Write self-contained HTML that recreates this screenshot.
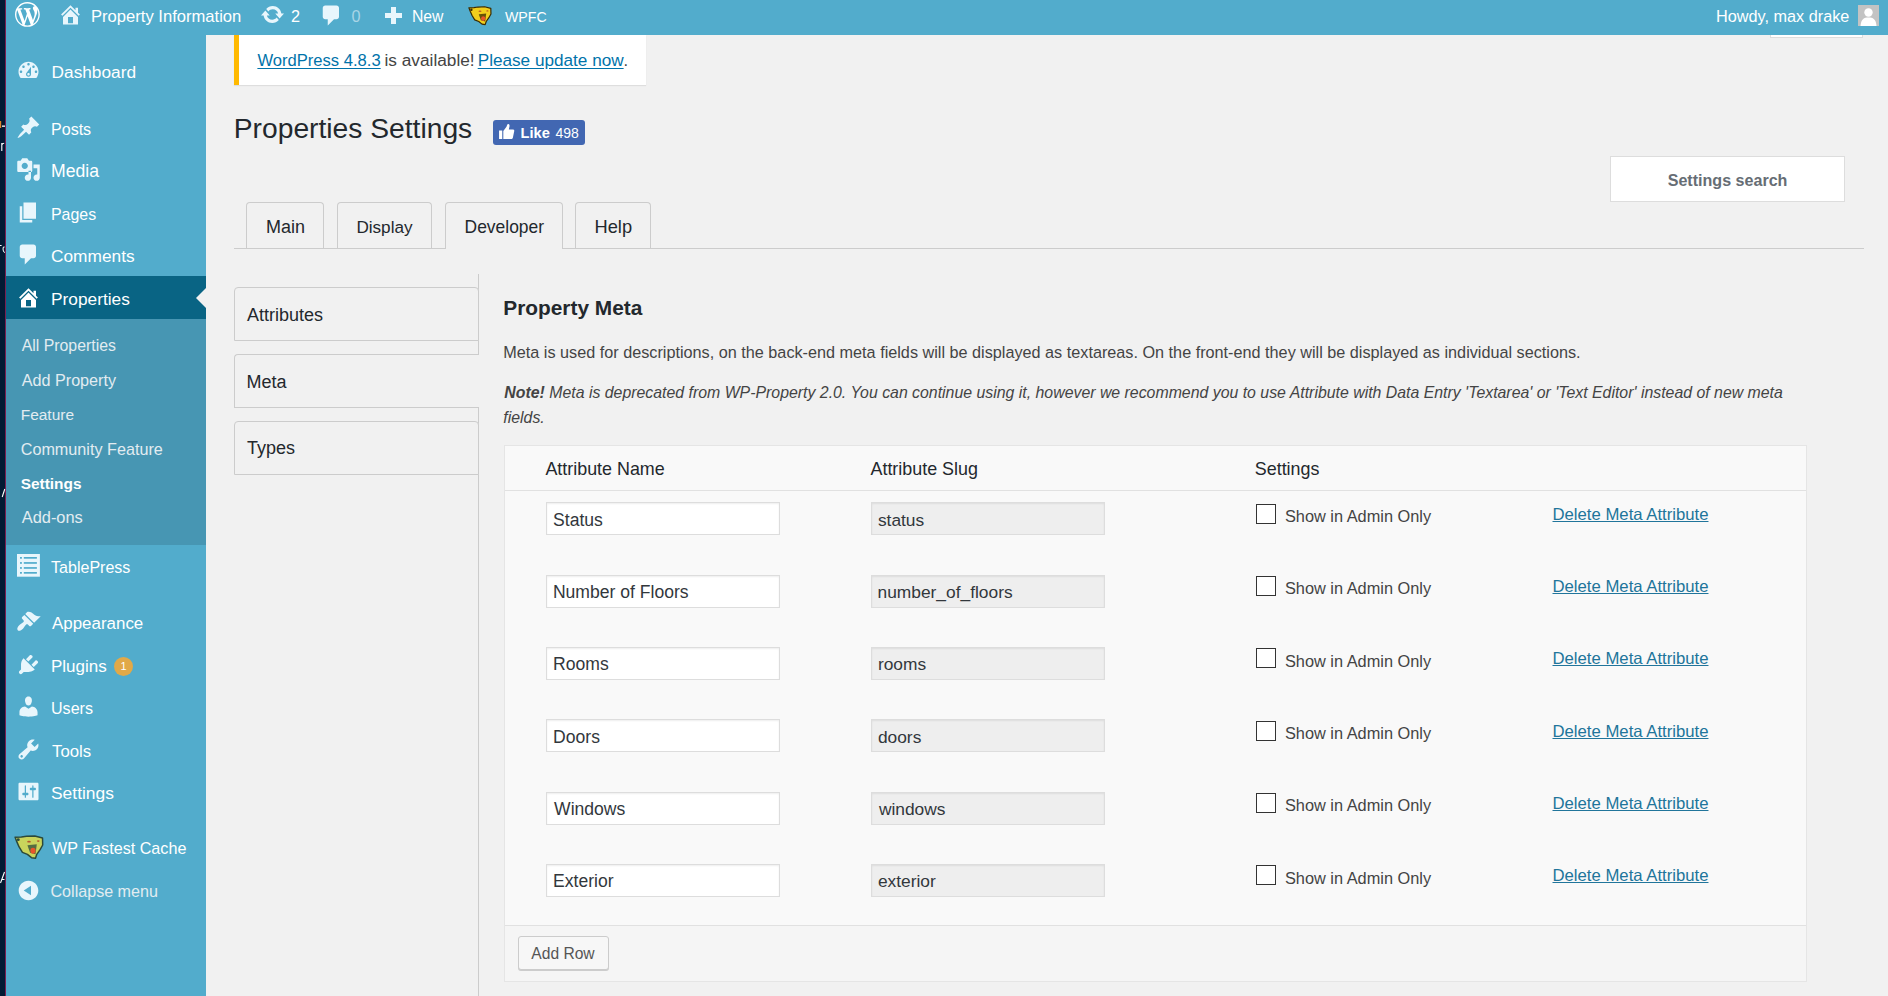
<!DOCTYPE html>
<html><head><meta charset="utf-8"><title>Properties Settings</title>
<style>
html,body{margin:0;padding:0;width:1888px;height:996px;overflow:hidden;background:#f1f1f1;font-family:"Liberation Sans", sans-serif;}
.t{position:absolute;line-height:1;white-space:nowrap;}
.r{position:absolute;}
</style></head><body>
<div class="r" style="left:0px;top:0px;width:5px;height:996px;background:#021a33"></div>
<div class="r" style="left:5px;top:0px;width:1px;height:996px;background:#7a1d4f"></div>
<svg class="r" style="left:0;top:0" width="6" height="996" viewBox="0 0 6 996">
<rect x="0" y="121" width="1.2" height="7" fill="#d9822b"/><rect x="2" y="125.5" width="3" height="1.3" fill="#fff"/>
<path d="M1.8 143 V151 M1.8 145 Q2.5 143.3 4.2 143.3" stroke="#fff" stroke-width="1.1" fill="none"/>
<path d="M0 245.5 H1.6 M4.6 247 Q3 246 3 249 Q3 252.5 5 252.5" stroke="#fff" stroke-width="1" fill="none"/>
<path d="M2.2 497 L4.8 489" stroke="#fff" stroke-width="1.1"/>
<path d="M0.5 883 L4.5 872 M1.5 879.5 H4.5" stroke="#fff" stroke-width="1.1" fill="none"/>
</svg>
<div class="r" style="left:6px;top:35px;width:200px;height:961px;background:#52accc"></div>
<div class="r" style="left:6px;top:0px;width:1882px;height:35px;background:#52accc"></div>
<svg class="r" style="left:15px;top:2px" width="24.8" height="24.8" viewBox="0 0 20 20"><path fill="#fff" d="M20 10c0-5.51-4.490-10-10-10C4.48 0 0 4.49 0 10c0 5.52 4.48 10 10 10 5.51 0 10-4.48 10-10zM7.78 15.37L4.37 6.22c.55-.02 1.17-.08 1.17-.08.5-.06.44-1.13-.06-1.11 0 0-1.45.11-2.37.11-.18 0-.37 0-.58-.01C4.12 2.69 6.87 1.11 10 1.11c2.33 0 4.45.87 6.05 2.34-.68-.11-1.65.39-1.65 1.58 0 .74.45 1.36.9 2.1.35.61.55 1.36.55 2.46 0 1.49-1.4 5-1.4 5l-3.03-8.37c.54-.02.82-.17.82-.17.5-.05.44-1.25-.06-1.22 0 0-1.44.12-2.38.12-.87 0-2.33-.12-2.33-.12-.5-.03-.56 1.2-.06 1.22l.92.08 1.26 3.41zM17.41 10c.24-.64.74-1.87.43-4.25.7 1.29 1.05 2.71 1.05 4.25 0 3.29-1.73 6.24-4.4 7.78.97-2.59 1.94-5.2 2.92-7.780zM6.1 18.09C3.12 16.65 1.11 13.53 1.11 10c0-1.3.23-2.48.72-3.59C3.25 10.3 4.67 14.2 6.1 18.09zm4.03-6.63l2.58 6.98c-.86.29-1.76.45-2.71.45-.79 0-1.57-.11-2.29-.33.81-2.38 1.62-4.74 2.42-7.1z"/></svg>
<svg class="r" style="left:58px;top:2px" width="25" height="25" viewBox="0 0 20 20"><path fill="#e8f6fc" d="M16 8.5l1.53 1.53-1.06 1.06L10 4.62l-6.47 6.47-1.06-1.06L10 2.5l4 4v-2h2v4zm-6-2.46l6 5.99V18H4v-5.97zM12 17v-5H8v5h4z"/></svg>
<div class="t" style="left:91.00px;top:9px;font-size:16.609px;color:#fff;font-weight:normal;font-style:normal;">Property Information</div>
<svg class="r" style="left:260px;top:2px" width="25" height="25" viewBox="0 0 20 20"><path fill="#e8f6fc" d="M10.2 3.28c3.53 0 6.43 2.61 6.92 6h2.08l-3.5 4-3.5-4h2.32c-.45-1.97-2.21-3.45-4.32-3.45-1.45 0-2.73.71-3.54 1.78L4.95 5.66C6.23 4.2 8.11 3.28 10.2 3.28zm-.4 13.44c-3.52 0-6.43-2.61-6.92-6H.8l3.5-4c1.17 1.33 2.33 2.67 3.5 4H5.48c.45 1.97 2.21 3.45 4.32 3.45 1.45 0 2.73-.71 3.54-1.78l1.71 1.95c-1.28 1.46-3.15 2.38-5.25 2.38z"/></svg>
<div class="t" style="left:291.00px;top:8px;font-size:16.250px;color:#fff;font-weight:normal;font-style:normal;">2</div>
<svg class="r" style="left:319px;top:3px" width="25" height="25" viewBox="0 0 20 20"><path fill="#e8f6fc" d="M5 2h9c1.1 0 2 .9 2 2v7c0 1.1-.9 2-2 2h-2l-5 5v-5H5c-1.1 0-2-.9-2-2V4c0-1.1.9-2 2-2z"/></svg>
<div class="t" style="left:351.60px;top:8px;font-size:16.250px;color:#a8d5e6;font-weight:normal;font-style:normal;">0</div>
<div class="r" style="left:391px;top:7px;width:5px;height:17px;background:#e8f6fc"></div>
<div class="r" style="left:385px;top:13px;width:17px;height:5px;background:#e8f6fc"></div>
<div class="t" style="left:412.00px;top:9px;font-size:15.742px;color:#fff;font-weight:normal;font-style:normal;">New</div>
<svg class="r" style="left:467.5px;top:5.5px" width="24" height="20.0" viewBox="-1 -1 32 27">
<path d="M0 1.5 L6.8 1.1 L12.3 .4 L21.3 0 L29.6 2.2 L29.8 9.8 L27 14.8 L23.4 19.9 L22 24.2 L17.7 23.5 L13.3 19.9 L7.9 17.7 L4.3 11.9 L1.8 6.2Z" fill="#f2cf1c" stroke="#3a2a00" stroke-width="1.6" stroke-linejoin="round"/>
<path d="M13.3 10.1 L23.4 9 L22 19.9 L16.2 18.1Z" fill="#3a2a00" opacity=".75"/>
<ellipse cx="19.3" cy="16" rx="2.8" ry="3.2" fill="#e8542a"/>
<circle cx="3.4" cy="4" r="1.6" fill="#3a2a00"/>
<ellipse cx="15" cy="6.2" rx="2" ry="1" fill="#b03a20" opacity=".8"/>
<ellipse cx="25" cy="5.6" rx="1.5" ry=".9" fill="#b03a20" opacity=".8"/>
</svg>
<div class="t" style="left:505.00px;top:10px;font-size:14.176px;color:#fff;font-weight:normal;font-style:normal;">WPFC</div>
<div class="t" style="left:1716.00px;top:8px;font-size:16.250px;color:#fff;font-weight:normal;font-style:normal;">Howdy, max drake</div>
<svg class="r" style="left:1858px;top:5px" width="21" height="21" viewBox="0 0 21 21">
<rect width="21" height="21" fill="#c3c3c3"/>
<circle cx="10.5" cy="7.5" r="4.2" fill="#fff"/>
<path d="M2.5 21 C3 14 6 12.5 10.5 12.5 C15 12.5 18 14 18.5 21Z" fill="#fff"/>
</svg>
<div class="r" style="left:234px;top:35px;width:412px;height:50px;background:#fff;box-shadow:0 1px 1px rgba(0,0,0,.08)"></div>
<div class="r" style="left:234px;top:35px;width:5px;height:50px;background:#ffb900"></div>
<div class="r" style="left:1770px;top:35px;width:93px;height:3px;background:#fff;border:1px solid #ddd;border-top:0;box-sizing:border-box"></div>
<div class="t" style="left:257.40px;top:53px;font-size:16.608px;color:#0073aa;font-weight:normal;font-style:normal;text-decoration:underline;text-underline-offset:2px">WordPress 4.8.3</div>
<div class="t" style="left:384.50px;top:52px;font-size:17.266px;color:#444;font-weight:normal;font-style:normal;">is available!</div>
<div class="t" style="left:477.70px;top:52px;font-size:17.173px;color:#0073aa;font-weight:normal;font-style:normal;text-decoration:underline;text-underline-offset:2px">Please update now</div>
<div class="t" style="left:623.50px;top:52px;font-size:16.500px;color:#444;font-weight:normal;font-style:normal;">.</div>
<div class="t" style="left:233.80px;top:114px;font-size:28.225px;color:#23282d;font-weight:normal;font-style:normal;">Properties Settings</div>
<div class="r" style="left:493px;top:120px;width:92px;height:25px;background:#4267b2;border-radius:3px"></div>
<svg class="r" style="left:498px;top:123px" width="17" height="17" viewBox="0 0 16 16"><path fill="#fff" d="M1 7h3v8H1z M5 7.5 L8 3.5 C8.5 2.5 8.7 1.2 9.5 1 C10.6 0.8 11 2 10.8 3.2 L10.2 6 H14 C15 6 15.5 6.8 15.3 7.6 L14 13.8 C13.8 14.6 13.2 15 12.4 15 H5 Z"/></svg>
<div class="t" style="left:520.60px;top:126px;font-size:14.627px;color:#fff;font-weight:bold;font-style:normal;">Like</div>
<div class="t" style="left:555.50px;top:126px;font-size:14.016px;color:#fff;font-weight:normal;font-style:normal;">498</div>
<div class="r" style="left:1610px;top:156px;width:235px;height:46px;background:#fff;border:1px solid #ddd;box-sizing:border-box"></div>
<div class="t" style="left:1667.70px;top:172px;font-size:16.081px;color:#666d74;font-weight:bold;font-style:normal;">Settings search</div>
<div class="r" style="left:234px;top:248px;width:1630px;height:1px;background:#ccc"></div>
<div class="r" style="left:246px;top:202px;width:78px;height:46px;background:#f1f1f1;border:1px solid #ccc;border-bottom:0;border-radius:4px 4px 0 0;box-sizing:border-box"></div>
<div class="t" style="left:266.10px;top:218px;font-size:17.986px;color:#23282d;font-weight:normal;font-style:normal;">Main</div>
<div class="r" style="left:337px;top:202px;width:95px;height:46px;background:#f1f1f1;border:1px solid #ccc;border-bottom:0;border-radius:4px 4px 0 0;box-sizing:border-box"></div>
<div class="t" style="left:356.40px;top:219px;font-size:17.137px;color:#23282d;font-weight:normal;font-style:normal;">Display</div>
<div class="r" style="left:445px;top:202px;width:118px;height:47px;background:#f1f1f1;border:1px solid #ccc;border-bottom:0;border-radius:4px 4px 0 0;box-sizing:border-box"></div>
<div class="t" style="left:464.60px;top:219px;font-size:17.435px;color:#23282d;font-weight:normal;font-style:normal;">Developer</div>
<div class="r" style="left:575px;top:202px;width:76px;height:46px;background:#f1f1f1;border:1px solid #ccc;border-bottom:0;border-radius:4px 4px 0 0;box-sizing:border-box"></div>
<div class="t" style="left:594.50px;top:218px;font-size:18.275px;color:#23282d;font-weight:normal;font-style:normal;">Help</div>
<div class="r" style="left:478px;top:274px;width:1px;height:722px;background:#ccc"></div>
<div class="r" style="left:234px;top:287px;width:245px;height:54px;background:#f1f1f1;border:1px solid #ccc;border-radius:4px 4px 0 0;box-sizing:border-box"></div>
<div class="r" style="left:234px;top:354px;width:245px;height:54px;background:#f1f1f1;border:1px solid #ccc;border-right:0;border-radius:4px 0 0 0;box-sizing:border-box"></div>
<div class="r" style="left:234px;top:421px;width:245px;height:54px;background:#f1f1f1;border:1px solid #ccc;border-radius:4px 4px 0 0;box-sizing:border-box"></div>
<div class="t" style="left:247.00px;top:306px;font-size:18.000px;color:#23282d;font-weight:normal;font-style:normal;">Attributes</div>
<div class="t" style="left:246.50px;top:373px;font-size:18.000px;color:#23282d;font-weight:normal;font-style:normal;">Meta</div>
<div class="t" style="left:247.00px;top:439px;font-size:18.000px;color:#23282d;font-weight:normal;font-style:normal;">Types</div>
<div class="t" style="left:503.30px;top:298px;font-size:20.851px;color:#23282d;font-weight:bold;font-style:normal;">Property Meta</div>
<div class="t" style="left:503.30px;top:344px;font-size:16.230px;color:#444;font-weight:normal;font-style:normal;">Meta is used for descriptions, on the back-end meta fields will be displayed as textareas. On the front-end they will be displayed as individual sections.</div>
<div class="t" style="left:504.30px;top:385px;font-size:15.876px;color:#444;font-weight:normal;font-style:italic;"><b>Note!</b> Meta is deprecated from WP-Property 2.0. You can continue using it, however we recommend you to use Attribute with Data Entry 'Textarea' or 'Text Editor' instead of new meta</div>
<div class="t" style="left:503.30px;top:410px;font-size:15.876px;color:#444;font-weight:normal;font-style:italic;">fields.</div>
<div class="r" style="left:504px;top:445px;width:1303px;height:537px;background:#f9f9f9;border:1px solid #e5e5e5;box-sizing:border-box"></div>
<div class="r" style="left:505px;top:490px;width:1301px;height:1px;background:#e1e1e1"></div>
<div class="r" style="left:505px;top:925px;width:1301px;height:56px;background:#f5f5f5"></div>
<div class="r" style="left:505px;top:925px;width:1301px;height:1px;background:#e1e1e1"></div>
<div class="t" style="left:545.40px;top:461px;font-size:17.906px;color:#23282d;font-weight:normal;font-style:normal;">Attribute Name</div>
<div class="t" style="left:870.50px;top:461px;font-size:17.906px;color:#23282d;font-weight:normal;font-style:normal;">Attribute Slug</div>
<div class="t" style="left:1254.80px;top:461px;font-size:17.906px;color:#23282d;font-weight:normal;font-style:normal;">Settings</div>
<div class="r" style="left:546px;top:502px;width:234px;height:33px;background:#fff;border:1px solid #ddd;box-shadow:inset 0 1px 2px rgba(0,0,0,.07);box-sizing:border-box"></div>
<div class="r" style="left:871px;top:502px;width:234px;height:33px;background:#eee;border:1px solid #ddd;box-shadow:inset 0 1px 2px rgba(0,0,0,.07);box-sizing:border-box"></div>
<div class="t" style="left:553.10px;top:512px;font-size:17.576px;color:#32373c;font-weight:normal;font-style:normal;">Status</div>
<div class="t" style="left:877.90px;top:512px;font-size:17.378px;color:#32373c;font-weight:normal;font-style:normal;">status</div>
<div class="r" style="left:1256px;top:504px;width:20px;height:20px;background:#fff;border:1px solid #333;box-sizing:border-box"></div>
<div class="t" style="left:1284.90px;top:508px;font-size:16.358px;color:#444;font-weight:normal;font-style:normal;">Show in Admin Only</div>
<div class="t" style="left:1552.50px;top:507px;font-size:16.714px;color:#21759b;font-weight:normal;font-style:normal;text-decoration:underline;text-underline-offset:1px">Delete Meta Attribute</div>
<div class="r" style="left:546px;top:575px;width:234px;height:33px;background:#fff;border:1px solid #ddd;box-shadow:inset 0 1px 2px rgba(0,0,0,.07);box-sizing:border-box"></div>
<div class="r" style="left:871px;top:575px;width:234px;height:33px;background:#eee;border:1px solid #ddd;box-shadow:inset 0 1px 2px rgba(0,0,0,.07);box-sizing:border-box"></div>
<div class="t" style="left:552.90px;top:584px;font-size:17.576px;color:#32373c;font-weight:normal;font-style:normal;">Number of Floors</div>
<div class="t" style="left:877.50px;top:584px;font-size:17.378px;color:#32373c;font-weight:normal;font-style:normal;">number_of_floors</div>
<div class="r" style="left:1256px;top:576px;width:20px;height:20px;background:#fff;border:1px solid #333;box-sizing:border-box"></div>
<div class="t" style="left:1284.90px;top:580px;font-size:16.358px;color:#444;font-weight:normal;font-style:normal;">Show in Admin Only</div>
<div class="t" style="left:1552.50px;top:579px;font-size:16.714px;color:#21759b;font-weight:normal;font-style:normal;text-decoration:underline;text-underline-offset:1px">Delete Meta Attribute</div>
<div class="r" style="left:546px;top:647px;width:234px;height:33px;background:#fff;border:1px solid #ddd;box-shadow:inset 0 1px 2px rgba(0,0,0,.07);box-sizing:border-box"></div>
<div class="r" style="left:871px;top:647px;width:234px;height:33px;background:#eee;border:1px solid #ddd;box-shadow:inset 0 1px 2px rgba(0,0,0,.07);box-sizing:border-box"></div>
<div class="t" style="left:553.10px;top:656px;font-size:17.576px;color:#32373c;font-weight:normal;font-style:normal;">Rooms</div>
<div class="t" style="left:877.90px;top:656px;font-size:17.378px;color:#32373c;font-weight:normal;font-style:normal;">rooms</div>
<div class="r" style="left:1256px;top:648px;width:20px;height:20px;background:#fff;border:1px solid #333;box-sizing:border-box"></div>
<div class="t" style="left:1284.90px;top:653px;font-size:16.358px;color:#444;font-weight:normal;font-style:normal;">Show in Admin Only</div>
<div class="t" style="left:1552.50px;top:651px;font-size:16.714px;color:#21759b;font-weight:normal;font-style:normal;text-decoration:underline;text-underline-offset:1px">Delete Meta Attribute</div>
<div class="r" style="left:546px;top:719px;width:234px;height:33px;background:#fff;border:1px solid #ddd;box-shadow:inset 0 1px 2px rgba(0,0,0,.07);box-sizing:border-box"></div>
<div class="r" style="left:871px;top:719px;width:234px;height:33px;background:#eee;border:1px solid #ddd;box-shadow:inset 0 1px 2px rgba(0,0,0,.07);box-sizing:border-box"></div>
<div class="t" style="left:553.10px;top:729px;font-size:17.576px;color:#32373c;font-weight:normal;font-style:normal;">Doors</div>
<div class="t" style="left:877.90px;top:729px;font-size:17.378px;color:#32373c;font-weight:normal;font-style:normal;">doors</div>
<div class="r" style="left:1256px;top:721px;width:20px;height:20px;background:#fff;border:1px solid #333;box-sizing:border-box"></div>
<div class="t" style="left:1284.90px;top:725px;font-size:16.358px;color:#444;font-weight:normal;font-style:normal;">Show in Admin Only</div>
<div class="t" style="left:1552.50px;top:724px;font-size:16.714px;color:#21759b;font-weight:normal;font-style:normal;text-decoration:underline;text-underline-offset:1px">Delete Meta Attribute</div>
<div class="r" style="left:546px;top:792px;width:234px;height:33px;background:#fff;border:1px solid #ddd;box-shadow:inset 0 1px 2px rgba(0,0,0,.07);box-sizing:border-box"></div>
<div class="r" style="left:871px;top:792px;width:234px;height:33px;background:#eee;border:1px solid #ddd;box-shadow:inset 0 1px 2px rgba(0,0,0,.07);box-sizing:border-box"></div>
<div class="t" style="left:554.10px;top:801px;font-size:17.576px;color:#32373c;font-weight:normal;font-style:normal;">Windows</div>
<div class="t" style="left:878.90px;top:801px;font-size:17.378px;color:#32373c;font-weight:normal;font-style:normal;">windows</div>
<div class="r" style="left:1256px;top:793px;width:20px;height:20px;background:#fff;border:1px solid #333;box-sizing:border-box"></div>
<div class="t" style="left:1284.90px;top:797px;font-size:16.358px;color:#444;font-weight:normal;font-style:normal;">Show in Admin Only</div>
<div class="t" style="left:1552.50px;top:796px;font-size:16.714px;color:#21759b;font-weight:normal;font-style:normal;text-decoration:underline;text-underline-offset:1px">Delete Meta Attribute</div>
<div class="r" style="left:546px;top:864px;width:234px;height:33px;background:#fff;border:1px solid #ddd;box-shadow:inset 0 1px 2px rgba(0,0,0,.07);box-sizing:border-box"></div>
<div class="r" style="left:871px;top:864px;width:234px;height:33px;background:#eee;border:1px solid #ddd;box-shadow:inset 0 1px 2px rgba(0,0,0,.07);box-sizing:border-box"></div>
<div class="t" style="left:553.10px;top:873px;font-size:17.576px;color:#32373c;font-weight:normal;font-style:normal;">Exterior</div>
<div class="t" style="left:877.90px;top:873px;font-size:17.378px;color:#32373c;font-weight:normal;font-style:normal;">exterior</div>
<div class="r" style="left:1256px;top:865px;width:20px;height:20px;background:#fff;border:1px solid #333;box-sizing:border-box"></div>
<div class="t" style="left:1284.90px;top:870px;font-size:16.358px;color:#444;font-weight:normal;font-style:normal;">Show in Admin Only</div>
<div class="t" style="left:1552.50px;top:868px;font-size:16.714px;color:#21759b;font-weight:normal;font-style:normal;text-decoration:underline;text-underline-offset:1px">Delete Meta Attribute</div>
<div class="r" style="left:518px;top:936px;width:91px;height:34px;background:#f7f7f7;border:1px solid #ccc;border-radius:3px;box-shadow:0 1px 0 #ccc;box-sizing:border-box"></div>
<div class="t" style="left:531.30px;top:946px;font-size:15.610px;color:#555;font-weight:normal;font-style:normal;">Add Row</div>
<div class="r" style="left:6px;top:276px;width:200px;height:43px;background:#096484"></div>
<svg class="r" style="left:196px;top:288px" width="10" height="20" viewBox="0 0 10 20"><path d="M10 0 L0 10 L10 20Z" fill="#f1f1f1"/></svg>
<div class="r" style="left:6px;top:319px;width:200px;height:226px;background:#4796b3"></div>
<div class="t" style="left:51.60px;top:64px;font-size:17.253px;color:#fff;font-weight:normal;font-style:normal;">Dashboard</div>
<svg class="r" style="left:15.8px;top:58.2px" width="25" height="25" viewBox="0 0 20 20"><path fill="#e8f6fc" d="M3.76 16h12.48c1.1-1.37 1.76-3.11 1.76-5 0-4.42-3.58-8-8-8s-8 3.58-8 8c0 1.89.66 3.63 1.76 5zM10 4c.55 0 1 .45 1 1s-.45 1-1 1-1-.45-1-1 .45-1 1-1zM6 6c.55 0 1 .45 1 1s-.45 1-1 1-1-.45-1-1 .45-1 1-1zm8 0c.55 0 1 .45 1 1s-.45 1-1 1-1-.45-1-1 .45-1 1-1zm-5.37 5.55L12 7v6c0 1.1-.9 2-2 2s-2-.9-2-2c0-.57.24-1.08.63-1.45zM4 10c.55 0 1 .45 1 1s-.45 1-1 1-1-.45-1-1 .45-1 1-1zm12 0c.55 0 1 .45 1 1s-.45 1-1 1-1-.45-1-1 .45-1 1-1zm-5 3c0-.55-.45-1-1-1s-1 .45-1 1 .45 1 1 1 1-.45 1-1z"/></svg>
<div class="t" style="left:51.00px;top:121px;font-size:16.065px;color:#fff;font-weight:normal;font-style:normal;">Posts</div>
<svg class="r" style="left:15.8px;top:115.2px" width="25" height="25" viewBox="0 0 20 20"><path fill="#e8f6fc" d="M10.44 3.02l1.82-1.82 6.36 6.35-1.83 1.82c-1.05-.68-2.48-.57-3.41.36l-.75.75c-.92.93-1.04 2.35-.35 3.41l-1.83 1.82-2.41-2.41-2.8 2.79c-.42.42-3.38 2.71-3.8 2.29s1.86-3.39 2.28-3.81l2.79-2.79L4.1 9.36l1.83-1.82c1.05.69 2.48.57 3.4-.36l.75-.75c.93-.92 1.05-2.35.36-3.41z"/></svg>
<div class="t" style="left:51.00px;top:163px;font-size:17.628px;color:#fff;font-weight:normal;font-style:normal;">Media</div>
<svg class="r" style="left:15.8px;top:157.2px" width="25" height="25" viewBox="0 0 20 20"><path fill="#e8f6fc" d="M13 11V4c0-.55-.45-1-1-1h-1.67L9 1H5L3.67 3H2c-.55 0-1 .45-1 1v7c0 .55.45 1 1 1h10c.55 0 1-.45 1-1zM7 4.5c1.38 0 2.5 1.12 2.5 2.5S8.38 9.5 7 9.5 4.5 8.38 4.5 7 5.62 4.5 7 4.5zM14 6h5v10.5c0 1.38-1.12 2.5-2.5 2.5S14 17.88 14 16.5s1.12-2.5 2.5-2.5c.17 0 .34.02.5.05V9h-3V6zm-4 8.05V11h2v5.5c0 1.38-1.12 2.5-2.5 2.5S7 17.88 7 16.5 8.12 14 9.5 14c.17 0 .34.02.5.05z"/></svg>
<div class="t" style="left:51.00px;top:207px;font-size:15.932px;color:#fff;font-weight:normal;font-style:normal;">Pages</div>
<svg class="r" style="left:15.8px;top:200.2px" width="25" height="25" viewBox="0 0 20 20"><path fill="#e8f6fc" d="M6 15V2h10v13H6zm-1 1h8v2H3V5h2v11z"/></svg>
<div class="t" style="left:51.00px;top:248px;font-size:17.316px;color:#fff;font-weight:normal;font-style:normal;">Comments</div>
<svg class="r" style="left:15.8px;top:242.2px" width="25" height="25" viewBox="0 0 20 20"><path fill="#e8f6fc" d="M5 2h9c1.1 0 2 .9 2 2v7c0 1.1-.9 2-2 2h-2l-5 5v-5H5c-1.1 0-2-.9-2-2V4c0-1.1.9-2 2-2z"/></svg>
<div class="t" style="left:51.00px;top:291px;font-size:17.319px;color:#fff;font-weight:normal;font-style:normal;">Properties</div>
<svg class="r" style="left:15.8px;top:285.2px" width="25" height="25" viewBox="0 0 20 20"><path fill="#fff" d="M16 8.5l1.53 1.53-1.06 1.06L10 4.62l-6.47 6.47-1.06-1.06L10 2.5l4 4v-2h2v4zm-6-2.46l6 5.99V18H4v-5.97zM12 17v-5H8v5h4z"/></svg>
<div class="t" style="left:51.10px;top:559px;font-size:16.035px;color:#fff;font-weight:normal;font-style:normal;">TablePress</div>
<div class="t" style="left:52.00px;top:616px;font-size:16.939px;color:#fff;font-weight:normal;font-style:normal;">Appearance</div>
<svg class="r" style="left:15.8px;top:609.2px" width="25" height="25" viewBox="0 0 20 20"><path fill="#e8f6fc" d="M14.48 11.06L7.41 3.99l1.5-1.5c.5-.56 2.3-.47 3.51.32 1.21.8 1.43 1.28 2.91 2.1 1.18.64 2.45 1.26 4.45.85zm-.71.71L6.7 4.7 4.93 6.47c-.39.39-.39 1.02 0 1.41l1.06 1.06c.39.39.39 1.03 0 1.42-.6.6-1.43 1.11-2.21 1.69-.35.26-.7.53-1.01.84C1.43 14.23.4 16.08 1.4 17.07c.99 1 2.84-.03 4.18-1.36.31-.31.58-.66.85-1.02.57-.78 1.08-1.61 1.69-2.21.39-.39 1.02-.39 1.41 0l1.06 1.06c.39.39 1.02.39 1.41 0z"/></svg>
<div class="t" style="left:51.00px;top:658px;font-size:17.004px;color:#fff;font-weight:normal;font-style:normal;">Plugins</div>
<svg class="r" style="left:15.8px;top:652.2px" width="25" height="25" viewBox="0 0 20 20"><path fill="#e8f6fc" d="M13.11 4.36L9.87 7.6 8 5.73l3.24-3.24c.35-.34 1.05-.2 1.56.32.52.51.66 1.21.31 1.55zm-8 1.77l.91-1.12 9.01 9.01-1.19.84c-.71.71-2.63 1.16-3.82 1.16H6.14L4.9 17.26c-.59.59-1.54.59-2.12 0-.59-.58-.59-1.53 0-2.12l1.24-1.24v-3.88c0-1.13.4-3.19 1.09-3.89zm7.26 3.97l3.24-3.24c.34-.35 1.04-.21 1.55.31.52.51.66 1.21.31 1.55l-3.24 3.25z"/></svg>
<div class="t" style="left:51.00px;top:700px;font-size:16.077px;color:#fff;font-weight:normal;font-style:normal;">Users</div>
<svg class="r" style="left:15.8px;top:694.2px" width="25" height="25" viewBox="0 0 20 20"><path fill="#e8f6fc" d="M10 9.25c-2.27 0-2.73-3.44-2.73-3.44C7 4.02 7.82 2 9.97 2c2.16 0 2.98 2.02 2.71 3.81 0 0-.41 3.44-2.68 3.44zm0 2.57L12.72 10c2.39 0 4.52 2.33 4.52 4.53v2.49s-3.65 1.13-7.24 1.13c-3.65 0-7.24-1.13-7.24-1.13v-2.49c0-2.25 1.94-4.48 4.47-4.48z"/></svg>
<div class="t" style="left:52.00px;top:744px;font-size:16.781px;color:#fff;font-weight:normal;font-style:normal;">Tools</div>
<svg class="r" style="left:15.8px;top:737.2px" width="25" height="25" viewBox="0 0 20 20"><path fill="#e8f6fc" d="M16.68 9.77c-1.34 1.34-3.3 1.67-4.95.99l-5.41 6.52c-.99.99-2.59.99-3.58 0s-.99-2.59 0-3.57l6.52-5.42c-.68-1.65-.35-3.61.99-4.95 1.28-1.28 3.12-1.62 4.72-1.06l-2.89 2.89 2.82 2.82 2.86-2.87c.53 1.58.18 3.39-1.08 4.65zM3.81 16.21c.4.39 1.04.39 1.43 0 .4-.4.4-1.04 0-1.43-.39-.4-1.03-.4-1.43 0-.39.39-.39 1.04 0 1.43z"/></svg>
<div class="t" style="left:51.00px;top:785px;font-size:17.424px;color:#fff;font-weight:normal;font-style:normal;">Settings</div>
<svg class="r" style="left:15.8px;top:779.2px" width="25" height="25" viewBox="0 0 20 20"><path fill="#e8f6fc" d="M18 16V4c0-.55-.45-1-1-1H3c-.55 0-1 .45-1 1v12c0 .55.45 1 1 1h14c.55 0 1-.45 1-1zM8 11h1c.55 0 1 .45 1 1s-.45 1-1 1H8v1.5c0 .28-.22.5-.5.5s-.5-.22-.5-.5V13H6c-.55 0-1-.45-1-1s.45-1 1-1h1V5.5c0-.28.22-.5.5-.5s.5.22.5.5V11zm5-2h-1c-.55 0-1-.45-1-1s.45-1 1-1h1V5.5c0-.28.22-.5.5-.5s.5.22.5.5V7h1c.55 0 1 .45 1 1s-.45 1-1 1h-1v5.5c0 .28-.22.5-.5.5s-.5-.22-.5-.5V9z"/></svg>
<div class="t" style="left:52.00px;top:840px;font-size:16.167px;color:#fff;font-weight:normal;font-style:normal;">WP Fastest Cache</div>
<svg class="r" style="left:17.2px;top:554.1px" width="23" height="23" viewBox="0 0 23 23"><rect x="0" y="0" width="22.9" height="22.7" fill="#e8f6fc"/>
<g fill="#52accc"><rect x="3" y="3" width="1.9" height="1.7"/><rect x="6.8" y="3" width="13.1" height="1.7"/>
<rect x="3" y="8.1" width="1.9" height="1.7"/><rect x="6.8" y="8.1" width="13.1" height="1.7"/>
<rect x="3" y="13.1" width="1.9" height="1.7"/><rect x="6.8" y="13.1" width="13.1" height="1.7"/>
<rect x="3" y="18" width="1.9" height="1.7"/><rect x="6.8" y="18" width="13.1" height="1.7"/></g></svg>
<div class="r" style="left:114px;top:656.5px;width:19px;height:19px;border-radius:50%;background:#e1a948;color:#fff;font-size:11px;line-height:19px;text-align:center">1</div>
<svg class="r" style="left:14px;top:835px" width="30" height="25.0" viewBox="-1 -1 32 27">
<path d="M0 1.5 L6.8 1.1 L12.3 .4 L21.3 0 L29.6 2.2 L29.8 9.8 L27 14.8 L23.4 19.9 L22 24.2 L17.7 23.5 L13.3 19.9 L7.9 17.7 L4.3 11.9 L1.8 6.2Z" fill="#c9d45c" stroke="#2c4a3a" stroke-width="1.6" stroke-linejoin="round"/>
<path d="M13.3 10.1 L23.4 9 L22 19.9 L16.2 18.1Z" fill="#2c4a3a" opacity=".75"/>
<ellipse cx="19.3" cy="16" rx="2.8" ry="3.2" fill="#e8542a"/>
<circle cx="3.4" cy="4" r="1.6" fill="#2c4a3a"/>
<ellipse cx="15" cy="6.2" rx="2" ry="1" fill="#b03a20" opacity=".8"/>
<ellipse cx="25" cy="5.6" rx="1.5" ry=".9" fill="#b03a20" opacity=".8"/>
</svg>
<div class="t" style="left:50.50px;top:883px;font-size:16.101px;color:#e2ecf1;font-weight:normal;font-style:normal;">Collapse menu</div>
<svg class="r" style="left:16.3px;top:877.5px" width="25" height="25" viewBox="0 0 20 20"><path fill="#e8f6fc" d="M10 2.16c4.33 0 7.84 3.51 7.84 7.84S14.33 17.84 10 17.84 2.16 14.33 2.16 10 5.71 2.16 10 2.16zm2 11.72V6.12L6.18 9.97z"/></svg>
<div class="t" style="left:20.70px;top:441px;font-size:16.205px;color:#e2ecf1;font-weight:normal;font-style:normal;">Community Feature</div>
<div class="t" style="left:21.70px;top:338px;font-size:15.851px;color:#e2ecf1;font-weight:normal;font-style:normal;">All Properties</div>
<div class="t" style="left:21.70px;top:372px;font-size:16.189px;color:#e2ecf1;font-weight:normal;font-style:normal;">Add Property</div>
<div class="t" style="left:20.70px;top:407px;font-size:15.488px;color:#e2ecf1;font-weight:normal;font-style:normal;">Feature</div>
<div class="t" style="left:20.70px;top:476px;font-size:15.421px;color:#fff;font-weight:bold;font-style:normal;">Settings</div>
<div class="t" style="left:21.70px;top:509px;font-size:16.423px;color:#e2ecf1;font-weight:normal;font-style:normal;">Add-ons</div>
</body></html>
